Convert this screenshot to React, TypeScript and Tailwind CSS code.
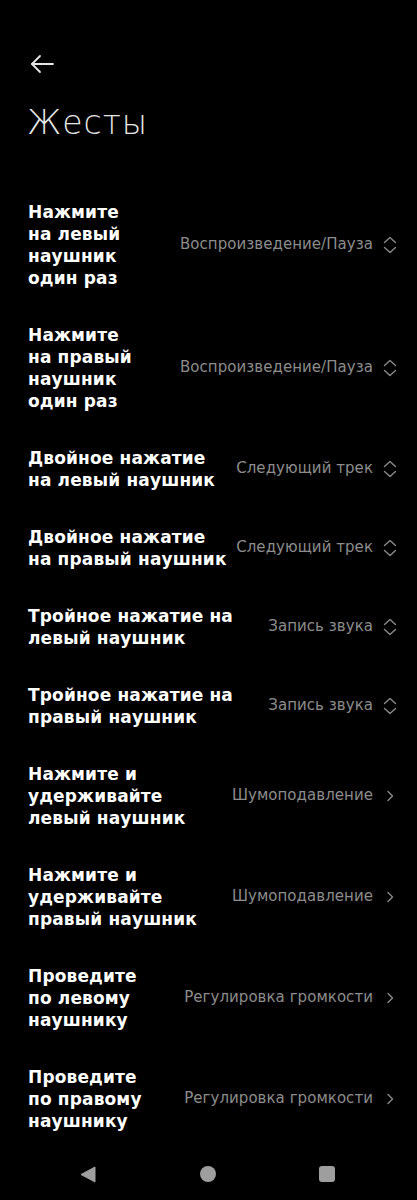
import React from "react";

type Item = { label: string[]; value: string; kind: "select" | "link" };

const items: Item[] = [
  { label: ["Нажмите", "на левый", "наушник", "один раз"], value: "Воспроизведение/Пауза", kind: "select" },
  { label: ["Нажмите", "на правый", "наушник", "один раз"], value: "Воспроизведение/Пауза", kind: "select" },
  { label: ["Двойное нажатие", "на левый наушник"], value: "Следующий трек", kind: "select" },
  { label: ["Двойное нажатие", "на правый наушник"], value: "Следующий трек", kind: "select" },
  { label: ["Тройное нажатие на", "левый наушник"], value: "Запись звука", kind: "select" },
  { label: ["Тройное нажатие на", "правый наушник"], value: "Запись звука", kind: "select" },
  { label: ["Нажмите и", "удерживайте", "левый наушник"], value: "Шумоподавление", kind: "link" },
  { label: ["Нажмите и", "удерживайте", "правый наушник"], value: "Шумоподавление", kind: "link" },
  { label: ["Проведите", "по левому", "наушнику"], value: "Регулировка громкости", kind: "link" },
  { label: ["Проведите", "по правому", "наушнику"], value: "Регулировка громкости", kind: "link" },
];

function UpDown() {
  return (
    <svg width="14" height="18" viewBox="0 0 14 18" fill="none" stroke="#8a8a8a" strokeWidth="1.4" strokeLinecap="round" strokeLinejoin="round">
      <path d="M1.5 6.5 L7 1.5 L12.5 6.5" />
      <path d="M1.5 11.5 L7 16.5 L12.5 11.5" />
    </svg>
  );
}

function Chevron() {
  return (
    <svg width="14" height="12" viewBox="0 0 14 12" fill="none" stroke="#8a8a8a" strokeWidth="1.4" strokeLinecap="round" strokeLinejoin="round">
      <path d="M5 1.5 L9.5 6 L5 10.5" />
    </svg>
  );
}

export default function App() {
  return (
    <div
      className="w-[417px] h-[1200px] bg-black text-white flex flex-col overflow-hidden"
      style={{ fontFamily: '"DejaVu Sans", "Noto Sans", sans-serif' }}
    >
      <div className="pl-[29px] pt-[52px] h-[26px] box-content">
        <svg width="26" height="24" viewBox="0 0 26 24" fill="none" stroke="#e6e6e6" strokeWidth="1.8" strokeLinecap="round" strokeLinejoin="round">
          <path d="M24 12 H3" />
          <path d="M11 4 L3 12 L11 20" />
        </svg>
      </div>
      <h1 className="pl-[27px] mt-[25px] text-[33px] leading-[40px] font-light text-[#e6e6e6] tracking-[1px]">Жесты</h1>
      <div className="mt-[40px] flex flex-col">
        {items.map((it, i) => (
          <div key={i} className="flex items-center pl-[28px] pr-[20px] py-[17.5px]">
            <div className="flex-1 text-[17px] leading-[22px] font-bold text-white tracking-[0.15px]">
              {it.label.map((l, j) => (
                <div key={j} className="whitespace-nowrap">{l}</div>
              ))}
            </div>
            <div className="flex items-center gap-[10px] text-[15px] tracking-[0.05px] text-[#8c8c8c]">
              <span className="whitespace-nowrap">{it.value}</span>
              {it.kind === "select" ? <UpDown /> : <Chevron />}
            </div>
          </div>
        ))}
      </div>
      <div className="mt-auto h-[50px] flex items-center justify-between pl-[80px] pr-[82px] pb-[2px]">
        <svg width="16" height="17" viewBox="0 0 16 17">
          <path d="M15 1 V16 L1 8.5 Z" fill="#9e9e9e" stroke="#9e9e9e" strokeWidth="1" strokeLinejoin="round" />
        </svg>
        <div className="w-[16px] h-[16px] rounded-full bg-[#9e9e9e]" />
        <div className="w-[16px] h-[16px] rounded-[3px] bg-[#9e9e9e]" />
      </div>
    </div>
  );
}
